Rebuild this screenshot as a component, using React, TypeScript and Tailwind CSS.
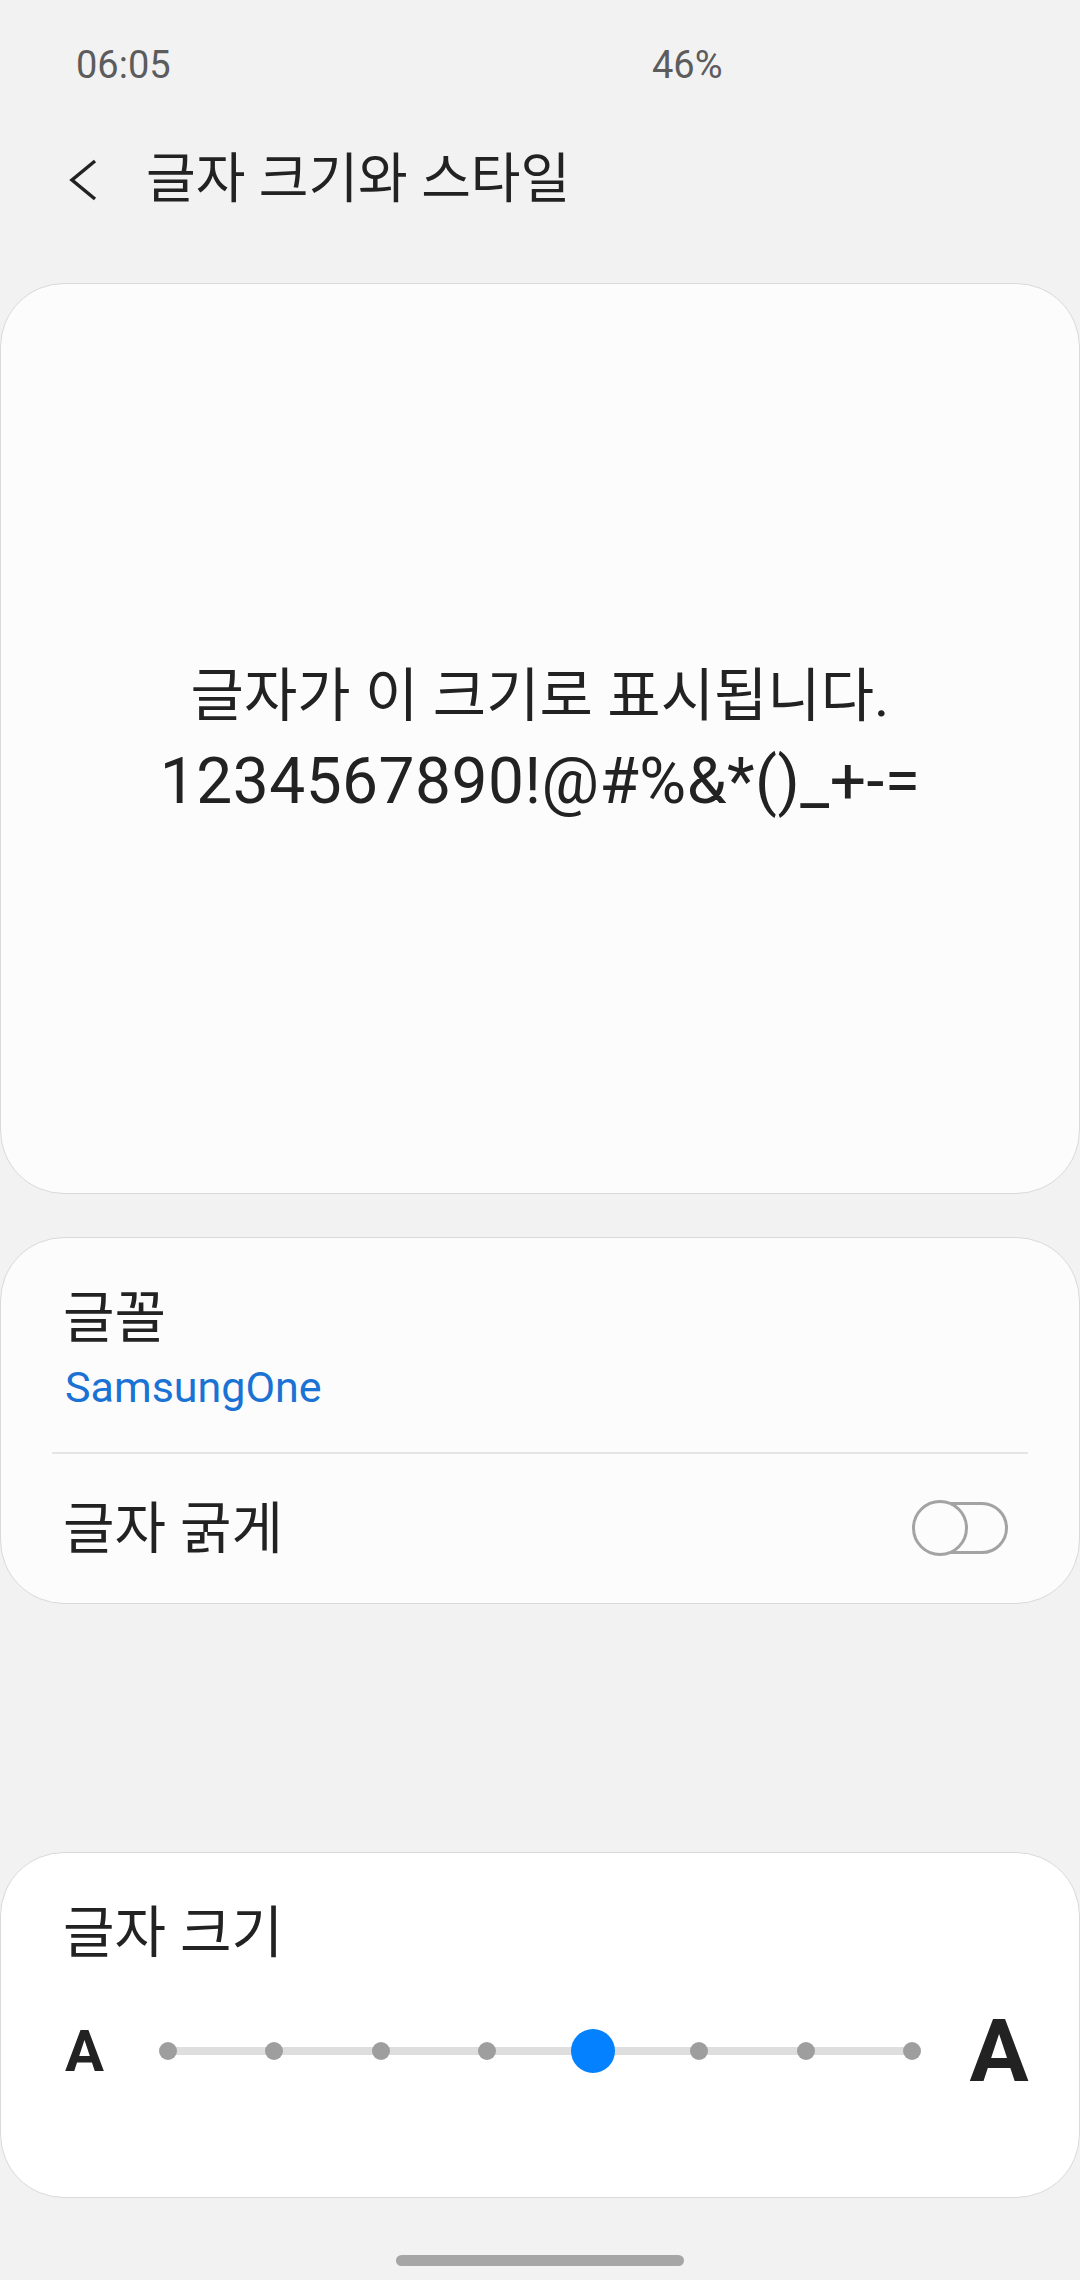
const dots = [0, 1, 2, 3, 4, 5, 6, 7];
const current = 4;

function BackIcon() {
  return (
    <svg width="28" height="42" viewBox="0 0 28 42" fill="none">
      <path d="M26 2 L3 21 L26 40" stroke="#222" strokeWidth="3.5" strokeLinejoin="miter" />
    </svg>
  );
}

function Toggle() {
  return (
    <svg width="100" height="60" viewBox="0 0 100 60" fill="none">
      <rect x="6" y="4.5" width="90.5" height="49" rx="24.5" stroke="#a3a3a3" strokeWidth="3" fill="#fcfcfc" />
      <circle cx="30" cy="29" r="26.5" stroke="#a3a3a3" strokeWidth="3" fill="#fcfcfc" />
    </svg>
  );
}

export default function App() {
  return (
    <div className="w-[1080px] h-[2280px] bg-[#f2f2f2] flex flex-col font-['Roboto','Noto_Sans_CJK_KR',sans-serif] text-[#222]">
      {/* status bar */}
      <div className="h-[130px] flex items-center pl-[76px] text-[38px] text-[#5c5c5c]">
        <span className="w-[576px]">06:05</span>
        <span>46%</span>
      </div>

      {/* title bar */}
      <div className="h-[100px] flex items-center pl-[69px]">
        <BackIcon />
        <h1 className="ml-[49px] text-[54px] leading-[64px] text-[#222]">글자 크기와 스타일</h1>
      </div>

      {/* preview */}
      <div className="mt-[53px] h-[911px] rounded-[64px] border border-[#d9d9d9] bg-[#fcfcfc] flex flex-col items-center justify-center">
        <p className="text-[58px] leading-[85px]">글자가 이 크기로 표시됩니다.</p>
        <p className="text-[64px] leading-[85px] tracking-[0.5px]">1234567890!@#%&amp;*()_+-=</p>
      </div>

      {/* font settings */}
      <div className="mt-[43px] h-[367px] rounded-[64px] border border-[#d9d9d9] bg-[#fcfcfc] flex flex-col">
        <div className="px-[62px] pt-[48px]">
          <p className="text-[56px] leading-[64px]">글꼴</p>
          <p className="mt-[12px] pl-[2px] text-[43px] leading-[50px] text-[#1a72d4]">SamsungOne</p>
        </div>
        <div className="mt-[40px] mx-[51px] h-[2px] bg-[#e5e5e5]" />
        <div className="flex-1 flex items-center justify-between pl-[62px] pr-[69px]">
          <p className="text-[56px] leading-[64px]">글자 굵게</p>
          <Toggle />
        </div>
      </div>

      {/* font size */}
      <div className="mt-[248px] h-[346px] rounded-[64px] border border-[#d9d9d9] bg-white flex flex-col">
        <p className="pl-[62px] pt-[48px] text-[56px] leading-[64px]">글자 크기</p>
        <div className="mt-[46px] h-[80px] flex items-center pl-[63px]">
          <span className="w-[41px] text-[58px] font-bold leading-none text-center">A</span>
          <div className="ml-[41px] w-[788px] h-[44px] relative flex items-center justify-between">
            <div className="absolute left-[22px] right-[22px] top-1/2 -translate-y-1/2 h-[8px] bg-[#dedede]" />
            {dots.map((d) => (
              <div key={d} className="relative w-[44px] h-[44px] flex items-center justify-center">
                {d === current ? (
                  <div className="w-[44px] h-[44px] rounded-full bg-[#0381fe]" />
                ) : (
                  <div className="w-[18px] h-[18px] rounded-full bg-[#9e9e9e]" />
                )}
              </div>
            ))}
          </div>
          <span className="ml-[35px] w-[60px] text-[88px] font-bold leading-none text-center">A</span>
        </div>
      </div>

      {/* home indicator */}
      <div className="mt-[57px] mx-auto w-[288px] h-[11px] rounded-full bg-[#a6a6a6]" />
    </div>
  );
}
